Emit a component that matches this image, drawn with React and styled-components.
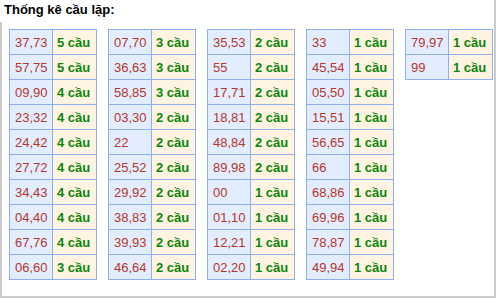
import React from "react";
import styled, { createGlobalStyle } from "styled-components";

const columns = [
  [
    ["37,73", 5], ["57,75", 5], ["09,90", 4], ["23,32", 4], ["24,42", 4],
    ["27,72", 4], ["34,43", 4], ["04,40", 4], ["67,76", 4], ["06,60", 3],
  ],
  [
    ["07,70", 3], ["36,63", 3], ["58,85", 3], ["03,30", 2], ["22", 2],
    ["25,52", 2], ["29,92", 2], ["38,83", 2], ["39,93", 2], ["46,64", 2],
  ],
  [
    ["35,53", 2], ["55", 2], ["17,71", 2], ["18,81", 2], ["48,84", 2],
    ["89,98", 2], ["00", 1], ["01,10", 1], ["12,21", 1], ["02,20", 1],
  ],
  [
    ["33", 1], ["45,54", 1], ["05,50", 1], ["15,51", 1], ["56,65", 1],
    ["66", 1], ["68,86", 1], ["69,96", 1], ["78,87", 1], ["49,94", 1],
  ],
  [
    ["79,97", 1], ["99", 1],
  ],
];

const GlobalStyle = createGlobalStyle`
  html, body {
    margin: 0;
    padding: 0;
    background: #fff;
  }
  body {
    font-family: "Liberation Sans", Arial, sans-serif;
  }
`;

const Page = styled.div`
  /* outer frame: right + bottom grey lines */
  width: 496px;
  height: 298px;
  box-sizing: border-box;
  display: flex;
  flex-direction: column;
  border-right: 2px solid #cacaca;
  border-bottom: 2px solid #cacaca;
`;

const Title = styled.h3`
  margin: 0;
  height: 22px;
  padding: 2px 0 0 4px;
  box-sizing: border-box;
  font-size: 13px;
  line-height: 16px;
  font-weight: bold;
  color: #000;
`;

const Body = styled.div`
  flex: 1;
  display: flex;
  align-items: flex-start;
  gap: 11px;
  padding: 7px 0 0 7px;
  border-left: 2px solid #cacaca;
`;

const Table = styled.table`
  width: 88px;
  flex: none;
  table-layout: fixed;
  border-collapse: separate;
  border-spacing: 0;
  border-top: 1px solid #8eaef0;
  border-left: 1px solid #8eaef0;
  font-size: 13px;
`;

const Cell = styled.td`
  height: 25px;
  box-sizing: border-box;
  padding: 0 0 0 ${(p) => (p.$count ? "4px" : "5px")};
  border-right: 1px solid #8eaef0;
  border-bottom: 1px solid #8eaef0;
  white-space: nowrap;
  overflow: hidden;
  vertical-align: middle;
  background: ${(p) => (p.$count ? "#fff4e1" : "#e2eeff")};
  color: ${(p) => (p.$count ? "#0b860b" : "#b8352a")};
  font-weight: ${(p) => (p.$count ? "bold" : "normal")};
`;

const StatTable = ({ rows }) => (
  <Table>
    <colgroup>
      <col style={{ width: 43 }} />
      <col style={{ width: 44 }} />
    </colgroup>
    <tbody>
      {rows.map(([pair, count]) => (
        <tr key={pair}>
          <Cell>{pair}</Cell>
          <Cell $count>{count} cầu</Cell>
        </tr>
      ))}
    </tbody>
  </Table>
);

export default function App() {
  return (
    <>
      <GlobalStyle />
      <Page>
        <Title>Thống kê cầu lặp:</Title>
        <Body>
          {columns.map((rows, i) => (
            <StatTable key={i} rows={rows} />
          ))}
        </Body>
      </Page>
    </>
  );
}
